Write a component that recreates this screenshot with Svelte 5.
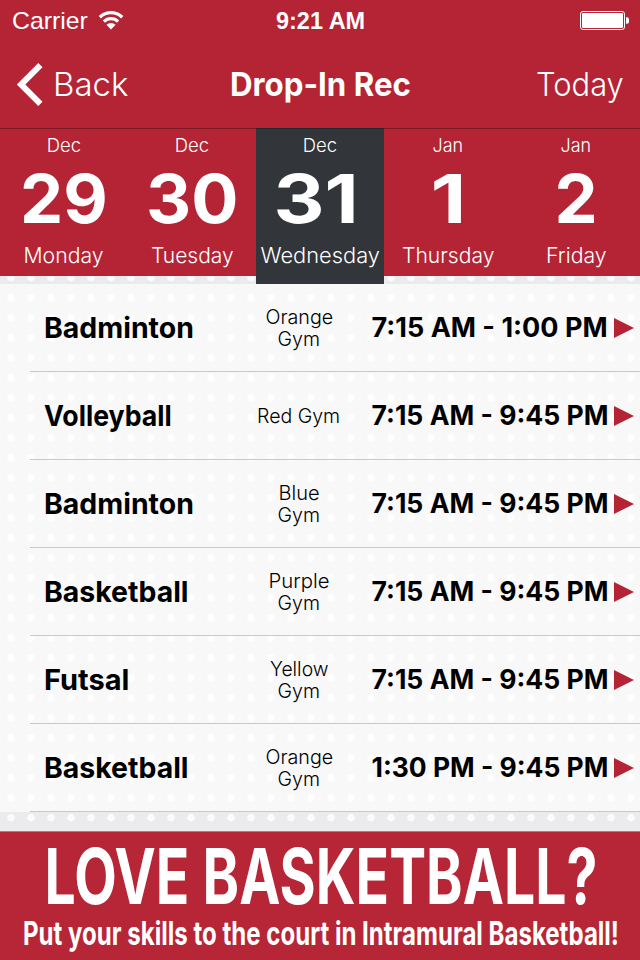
<script>
  const days = [
    { month: 'Dec', mw: 34, date: '29', dw: 88, name: 'Monday', nw: 80 },
    { month: 'Dec', mw: 34, date: '30', dw: 92, name: 'Tuesday', nw: 83 },
    { month: 'Dec', mw: 34, date: '31', dw: 85, name: 'Wednesday', nw: 119, selected: true },
    { month: 'Jan', mw: 31, date: '1', dw: 36, name: 'Thursday', nw: 92 },
    { month: 'Jan', mw: 31, date: '2', dw: 43, name: 'Friday', nw: 61 }
  ];

  const sessions = [
    { sport: 'Badminton', sw: 150, gym: [['Orange', 68], ['Gym', 42]], time: '7:15 AM - 1:00 PM' },
    { sport: 'Volleyball', sw: 128, gym: [['Red Gym', 83]], time: '7:15 AM - 9:45 PM' },
    { sport: 'Badminton', sw: 150, gym: [['Blue', 41], ['Gym', 42]], time: '7:15 AM - 9:45 PM' },
    { sport: 'Basketball', sw: 145, gym: [['Purple', 61], ['Gym', 42]], time: '7:15 AM - 9:45 PM' },
    { sport: 'Futsal', sw: 85, gym: [['Yellow', 59], ['Gym', 42]], time: '7:15 AM - 9:45 PM' },
    { sport: 'Basketball', sw: 145, gym: [['Orange', 68], ['Gym', 42]], time: '1:30 PM - 9:45 PM' }
  ];

  // Stretches a label horizontally to the given width.
  function fit(node, width) {
    node.style.transform = `scaleX(${width / node.offsetWidth})`;
  }
</script>

<div class="screen">
  <header>
    <div class="status">
      <div class="side">
        <span class="fit left" use:fit={75.5}>Carrier</span>
      </div>
      <svg class="wifi" width="26" height="19" viewBox="0 0 26 19">
        <path d="M1.8 6.2a16 16 0 0 1 22.4 0M5.9 10.6a10.2 10.2 0 0 1 14.2 0" fill="none" stroke="#fff" stroke-width="3.3" />
        <path d="M13 18.4l-4.6-4.6a6.6 6.6 0 0 1 9.2 0z" fill="#fff" />
      </svg>
      <b class="clock"><span class="fit" use:fit={89}>9:21 AM</span></b>
      <svg class="battery" width="50" height="20" viewBox="0 0 50 20">
        <rect x=".5" y=".5" width="44" height="18" rx="2.5" fill="none" stroke="#fff" />
        <rect x="2" y="2" width="41" height="15" rx="1.2" fill="#fff" />
        <path d="M46 6.2h1a2 2 0 0 1 2 2v2.6a2 2 0 0 1-2 2h-1z" fill="#fff" />
      </svg>
    </div>
    <nav>
      <div class="back">
        <svg width="26" height="43" viewBox="0 0 26 43">
          <path d="M23.4 2.2 4 21.5 23.4 40.8" fill="none" stroke="#fff" stroke-width="6" />
        </svg>
        <span class="fit left" use:fit={75}>Back</span>
      </div>
      <h1><span class="fit" use:fit={181}>Drop-In Rec</span></h1>
      <div class="today"><span class="fit right" use:fit={88}>Today</span></div>
    </nav>
  </header>

  <main>
    <div class="days">
      {#each days as day}
        <div class="day" class:selected={day.selected}>
          <div class="month"><span class="fit" use:fit={day.mw}>{day.month}</span></div>
          <div class="date"><span class="fit" use:fit={day.dw}>{day.date}</span></div>
          <div class="weekday"><span class="fit" use:fit={day.nw}>{day.name}</span></div>
        </div>
      {/each}
    </div>

    <div class="list">
      {#each sessions as s}
        <div class="row">
          <div class="sport"><span class="fit left" use:fit={s.sw}>{s.sport}</span></div>
          <div class="gym">
            {#each s.gym as [word, w]}
              <div><span class="fit" use:fit={w}>{word}</span></div>
            {/each}
          </div>
          <div class="time"><span class="fit right" use:fit={236.5}>{s.time}</span></div>
          <svg width="20" height="20" viewBox="0 0 20 20"><path d="M0 0 20 10 0 20z" fill="#b42435" /></svg>
        </div>
      {/each}
    </div>
  </main>

  <footer>
    <div class="love"><span class="fit" use:fit={553}>LOVE BASKETBALL?</span></div>
    <div class="sub"><span class="fit" use:fit={596}>Put your skills to the court in Intramural Basketball!</span></div>
  </footer>
</div>

<style>
  :global(body) { margin: 0; }
  .screen {
    width: 640px;
    height: 960px;
    display: flex;
    flex-direction: column;
    overflow: hidden;
    font-family: Inter, 'Liberation Sans', sans-serif;
    color: #fff;
  }
  .fit { display: inline-block; white-space: nowrap; flex: none; }
  .left { transform-origin: left center; }
  .right { transform-origin: right center; }
  header { background: #b42435; height: 128px; flex: none; }
  .status {
    height: 41px;
    display: grid;
    grid-template-columns: 98px 178px 88px 1fr 50px;
    padding: 0 10px 0 12px;
    width: 618px;
    align-items: center;
    font: 24px/41px 'Liberation Sans', Arial, sans-serif;
  }
  .side { width: 80px; }
  .wifi { margin-left: -12px; margin-top: -1px; }
  .clock { width: 88px; display: flex; justify-content: center; margin-left: -11px; }
  .battery { grid-column: 5; }
  nav {
    height: 87px;
    display: grid;
    grid-template-columns: 200px 240px 200px;
    align-items: center;
    font-size: 33px;
    font-weight: 300;
    line-height: 40px;
    margin-top: -1px;
  }
  .back { display: flex; align-items: center; padding-left: 17px; gap: 10px; }
  .back svg { position: relative; top: 1px; }
  h1 { margin: 0; font-size: 33px; font-weight: 700; display: flex; justify-content: center; }
  .today { display: flex; justify-content: flex-end; padding-right: 16px; }
  main {
    flex: 1;
    background: #ebebed radial-gradient(circle at 11px 9.7px, #fbfbfc 3.4px, transparent 4.1px) 0 0 / 20px 20px;
  }
  .days { display: flex; height: 156px; align-items: flex-start; }
  .day {
    width: 128px;
    height: 148px;
    box-sizing: border-box;
    background: #b42435;
    border-top: 1px solid #7b1924;
  }
  .selected { height: 156px; background: #32353a; border-color: #22252a; }
  .month, .date, .weekday { display: flex; justify-content: center; align-items: center; }
  .month { height: 31px; font-size: 18.5px; font-weight: 300; }
  .date { height: 76px; font-size: 67px; font-weight: 700; }
  .weekday { height: 37px; font-size: 22px; font-weight: 300; }
  .selected .date { padding-right: 7px; width: 121px; }
  .row {
    height: 88px;
    display: grid;
    grid-template-columns: 198px 110px 256px 20px;
    padding-left: 44px;
    align-items: center;
    box-sizing: border-box;
    color: #000;
    background: linear-gradient(#c8c8ca, #c8c8ca) 30px 87px / 610px 1px no-repeat, rgba(255, 255, 255, .65);
  }
  .sport { font-size: 29px; font-weight: 700; line-height: 36px; }
  .gym { font-size: 20px; font-weight: 300; line-height: 22px; margin-left: 4px; }
  .gym div { display: flex; justify-content: center; }
  .time { display: flex; justify-content: flex-end; font-size: 26.5px; font-weight: 700; line-height: 32px; margin-top: -3px; }
  .row svg { margin-left: 6px; }
  footer { height: 128px; flex: none; background: #b72637; border-top: 1px solid #9b8589; }
  .love, .sub { display: flex; justify-content: center; align-items: center; padding-left: 2px; }
  .love { height: 88px; font-size: 77px; font-weight: 700; line-height: 84px; }
  .sub { height: 26px; font-size: 33px; font-weight: 700; line-height: 26px; }
</style>
